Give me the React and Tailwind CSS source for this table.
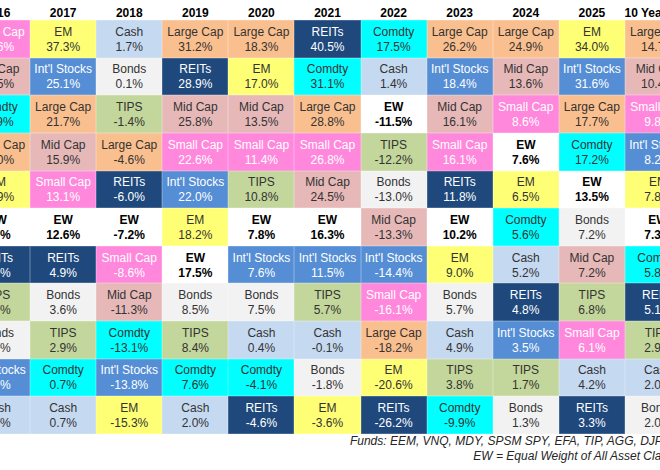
const STYLES = {
  'Large Cap': 'bg-[#fabf8f] text-[#333333]',
  'Mid Cap': 'bg-[#e6b9b8] text-[#333333]',
  'Small Cap': 'bg-[#ff88dd] text-white',
  "Int'l Stocks": 'bg-[#558ed5] text-white',
  EM: 'bg-[#ffff75] text-[#333333]',
  REITs: 'bg-[#1f497d] text-white',
  Comdty: 'bg-[#00ffff] text-[#333333]',
  TIPS: 'bg-[#c3d69b] text-[#333333]',
  Bonds: 'bg-[#f2f2f2] text-[#333333]',
  Cash: 'bg-[#c5d9f1] text-[#333333]',
  EW: 'bg-white text-black font-bold',
};

const YEARS = [
  {
    year: '2016',
    rows: [
      ['Small Cap', '26.6%'], ['Mid Cap', '20.5%'], ['Comdty', '11.9%'], ['Large Cap', '12.0%'],
      ['EM', '10.9%'], ['EW', '9.0%'], ['REITs', '8.5%'], ['TIPS', '4.7%'],
      ['Bonds', '2.6%'], ["Int'l Stocks", '1.4%'], ['Cash', '0.3%'],
    ],
  },
  {
    year: '2017',
    rows: [
      ['EM', '37.3%'], ["Int'l Stocks", '25.1%'], ['Large Cap', '21.7%'], ['Mid Cap', '15.9%'],
      ['Small Cap', '13.1%'], ['EW', '12.6%'], ['REITs', '4.9%'], ['Bonds', '3.6%'],
      ['TIPS', '2.9%'], ['Comdty', '0.7%'], ['Cash', '0.7%'],
    ],
  },
  {
    year: '2018',
    rows: [
      ['Cash', '1.7%'], ['Bonds', '0.1%'], ['TIPS', '-1.4%'], ['Large Cap', '-4.6%'],
      ['REITs', '-6.0%'], ['EW', '-7.2%'], ['Small Cap', '-8.6%'], ['Mid Cap', '-11.3%'],
      ['Comdty', '-13.1%'], ["Int'l Stocks", '-13.8%'], ['EM', '-15.3%'],
    ],
  },
  {
    year: '2019',
    rows: [
      ['Large Cap', '31.2%'], ['REITs', '28.9%'], ['Mid Cap', '25.8%'], ['Small Cap', '22.6%'],
      ["Int'l Stocks", '22.0%'], ['EM', '18.2%'], ['EW', '17.5%'], ['Bonds', '8.5%'],
      ['TIPS', '8.4%'], ['Comdty', '7.6%'], ['Cash', '2.0%'],
    ],
  },
  {
    year: '2020',
    rows: [
      ['Large Cap', '18.3%'], ['EM', '17.0%'], ['Mid Cap', '13.5%'], ['Small Cap', '11.4%'],
      ['TIPS', '10.8%'], ['EW', '7.8%'], ["Int'l Stocks", '7.6%'], ['Bonds', '7.5%'],
      ['Cash', '0.4%'], ['Comdty', '-4.1%'], ['REITs', '-4.6%'],
    ],
  },
  {
    year: '2021',
    rows: [
      ['REITs', '40.5%'], ['Comdty', '31.1%'], ['Large Cap', '28.8%'], ['Small Cap', '26.8%'],
      ['Mid Cap', '24.5%'], ['EW', '16.3%'], ["Int'l Stocks", '11.5%'], ['TIPS', '5.7%'],
      ['Cash', '-0.1%'], ['Bonds', '-1.8%'], ['EM', '-3.6%'],
    ],
  },
  {
    year: '2022',
    rows: [
      ['Comdty', '17.5%'], ['Cash', '1.4%'], ['EW', '-11.5%'], ['TIPS', '-12.2%'],
      ['Bonds', '-13.0%'], ['Mid Cap', '-13.3%'], ["Int'l Stocks", '-14.4%'], ['Small Cap', '-16.1%'],
      ['Large Cap', '-18.2%'], ['EM', '-20.6%'], ['REITs', '-26.2%'],
    ],
  },
  {
    year: '2023',
    rows: [
      ['Large Cap', '26.2%'], ["Int'l Stocks", '18.4%'], ['Mid Cap', '16.1%'], ['Small Cap', '16.1%'],
      ['REITs', '11.8%'], ['EW', '10.2%'], ['EM', '9.0%'], ['Bonds', '5.7%'],
      ['Cash', '4.9%'], ['TIPS', '3.8%'], ['Comdty', '-9.9%'],
    ],
  },
  {
    year: '2024',
    rows: [
      ['Large Cap', '24.9%'], ['Mid Cap', '13.6%'], ['Small Cap', '8.6%'], ['EW', '7.6%'],
      ['EM', '6.5%'], ['Comdty', '5.6%'], ['Cash', '5.2%'], ['REITs', '4.8%'],
      ["Int'l Stocks", '3.5%'], ['TIPS', '1.7%'], ['Bonds', '1.3%'],
    ],
  },
  {
    year: '2025',
    rows: [
      ['EM', '34.0%'], ["Int'l Stocks", '31.6%'], ['Large Cap', '17.7%'], ['Comdty', '17.2%'],
      ['EW', '13.5%'], ['Bonds', '7.2%'], ['Mid Cap', '7.2%'], ['TIPS', '6.8%'],
      ['Small Cap', '6.1%'], ['Cash', '4.2%'], ['REITs', '3.3%'],
    ],
  },
  {
    year: '10 Year Avg',
    rows: [
      ['Large Cap', '14.7%'], ['Mid Cap', '10.4%'], ['Small Cap', '9.8%'], ["Int'l Stocks", '8.2%'],
      ['EM', '7.8%'], ['EW', '7.3%'], ['Comdty', '5.8%'], ['REITs', '5.1%'],
      ['TIPS', '2.9%'], ['Cash', '2.0%'], ['Bonds', '2.0%'],
    ],
  },
];

function Cell({ name, value }) {
  return (
    <div
      className={`flex flex-col items-center justify-center pt-[2px] text-[12px] leading-[15px] whitespace-nowrap shadow-[inset_0_0_0_0.5px_rgba(255,255,255,0.35)] ${STYLES[name]}`}
    >
      <span>{name}</span>
      <span>{value}</span>
    </div>
  );
}

export default function App() {
  return (
    <div className="w-[660px] h-[470px] overflow-hidden bg-white font-['Liberation_Sans',Arial,sans-serif]">
      <div className="ml-[-36px] w-[727px]">
        {/* year headers */}
        <div className="grid grid-cols-[repeat(11,66.1px)] h-[20px]">
          {YEARS.map((col) => (
            <div
              key={col.year}
              className="flex items-end justify-center text-[12px] leading-[14px] font-bold text-black whitespace-nowrap"
            >
              {col.year}
            </div>
          ))}
        </div>

        {/* quilt, filled column by column */}
        <div className="grid grid-flow-col grid-cols-[repeat(11,66.1px)] grid-rows-[repeat(11,37.64px)]">
          {YEARS.map((col) =>
            col.rows.map(([name, value], i) => (
              <Cell key={col.year + i} name={name} value={value} />
            ))
          )}
        </div>

        {/* notes */}
        <div className="pr-[5px] text-right italic text-[12px] leading-[15.5px] text-[#262626] whitespace-nowrap">
          <p>Funds: EEM, VNQ, MDY, SPSM SPY, EFA, TIP, AGG, DJP, BIL</p>
          <p>EW = Equal Weight of All Asset Classes</p>
        </div>
      </div>
    </div>
  );
}
